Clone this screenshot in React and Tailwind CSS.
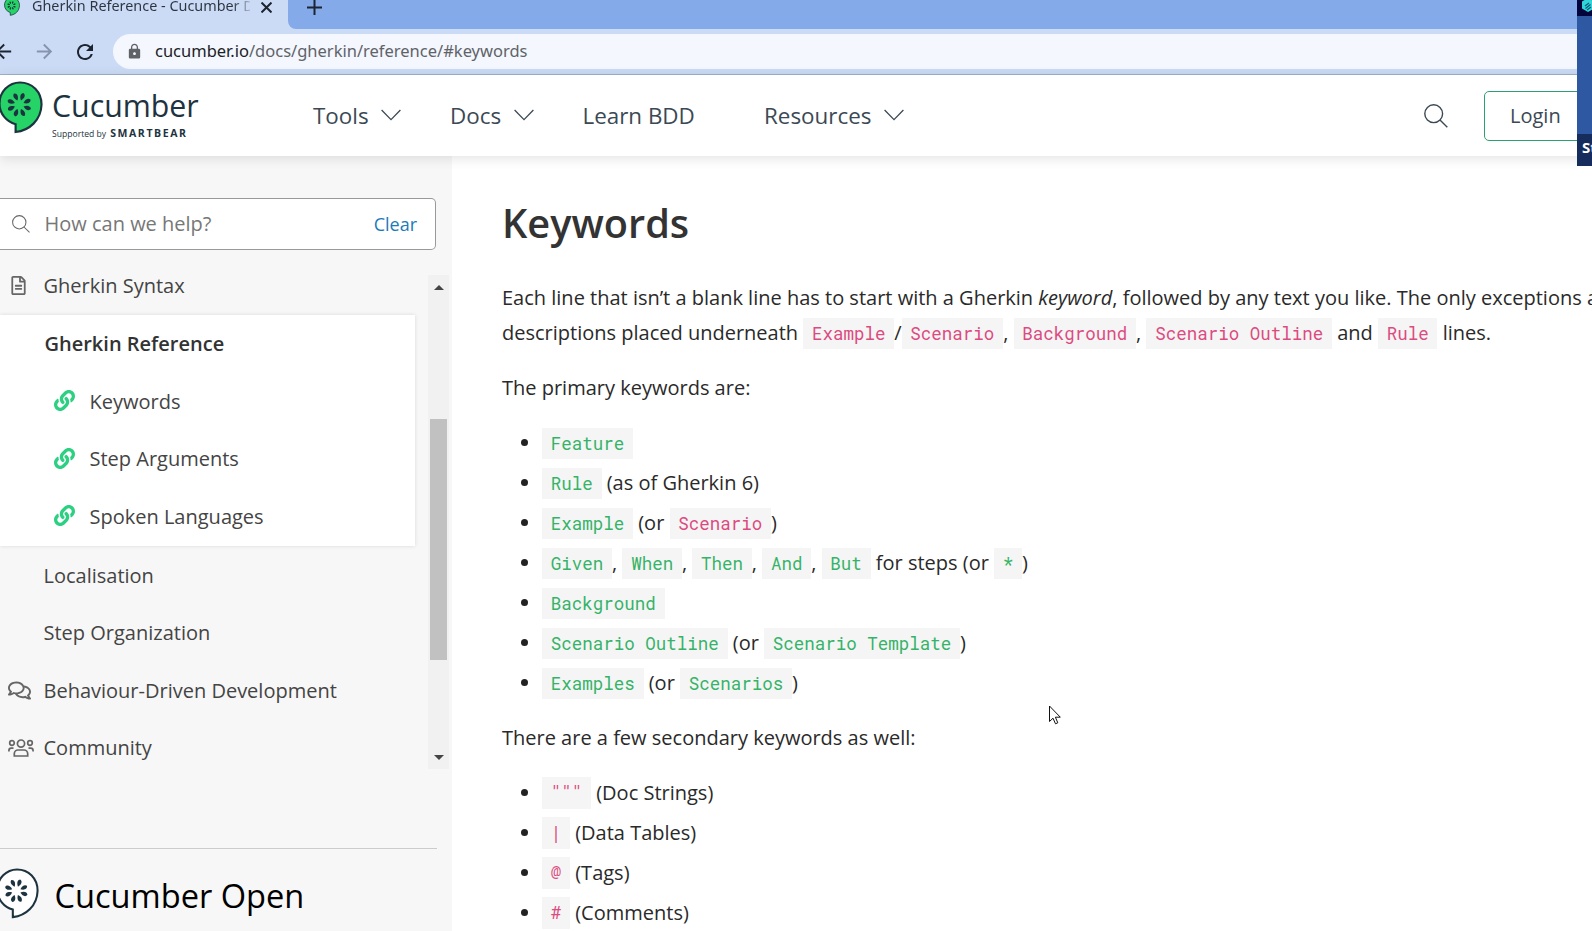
import React from 'react';
import { FaLink, FaRegFileAlt, FaRegComments } from 'react-icons/fa';
import { MdArrowBack, MdArrowForward, MdRefresh, MdLock } from 'react-icons/md';

const SEEDS = [22, 68, 112, 158, 202, 248, 292, 338];

function Balloon({ fill, className }) {
  return (
    <svg viewBox="0 0 46 54" className={className} preserveAspectRatio="none">
      <path
        d="M22.500 1.5C11 1.5 1.5 11 1.5 23c0 10 7 18.500 16.500 21v8C32 50.500 44 40 44.500 24 44.500 11 35 1.500 22.500 1.500Z"
        fill={fill}
        stroke="#1d3340"
        strokeWidth="2.2"
      />
      {SEEDS.map((a) => (
        <path
          key={a}
          d="M0 -4.800C-3.200 -8 -2.800 -11.500 -0.600 -12.600 2.600 -12 2.800 -8 0 -4.800Z"
          fill="#1d3340"
          transform={`translate(21.700 24.200) rotate(${a})`}
        />
      ))}
    </svg>
  );
}

function SearchIcon({ className }) {
  return (
    <svg viewBox="0 0 24 24" className={className} fill="none" stroke="currentColor" strokeWidth="1.4">
      <circle cx="9.700" cy="9.700" r="8.900" />
      <path d="M16 16l7.300 7.300" />
    </svg>
  );
}

function Chevron() {
  return (
    <svg viewBox="0 0 20 12" className="h-3 w-5" fill="none" stroke="#3c4a54" strokeWidth="1.3">
      <path d="M0.600 1L10 10.600 19.400 1" />
    </svg>
  );
}

function PeopleIcon() {
  return (
    <svg viewBox="0 0 26 18" className="h-[18px] w-[26px]" fill="none" stroke="#666" strokeWidth="1.7">
      <circle cx="13" cy="4.600" r="3.600" />
      <circle cx="4" cy="4" r="2.300" />
      <circle cx="22" cy="4" r="2.300" />
      <path d="M6.300 17v-2.200c0-2.200 1.700-3.800 3.700-3.800h6c2 0 3.700 1.600 3.700 3.800V17Z" />
      <path d="M.9 12.500V11.800c0-1.500 1-2.600 2.300-2.600h2.300M25.100 12.500V11.800c0-1.500-1-2.600-2.300-2.600h-2.300" />
    </svg>
  );
}

function Code({ children, green }) {
  return (
    <code
      className={`${green ? 'text-[#35b368]' : 'text-[#dc4b80]'} bg-[#f5f5f5] px-[8.75px] py-[4.4px] font-['Roboto_Mono','Liberation_Mono',monospace] text-[17.5px]`}
    >
      {children}
    </code>
  );
}

const G = ({ children }) => <Code green>{children}</Code>;

function Item({ children }) {
  return (
    <li className="flex h-10 items-center">
      <span className="mt-[-2px] mr-[14px] ml-[19px] size-[7px] rounded-full bg-[#222]" />
      <span className="leading-10 whitespace-nowrap">{children}</span>
    </li>
  );
}

function Row({ icon, children }) {
  return (
    <div className="flex h-[57.500px] shrink-0 items-center">
      <span className="flex w-[43.500px] items-center pl-2 text-[#666]">{icon}</span>
      <span>{children}</span>
    </div>
  );
}

function SubRow({ children }) {
  return (
    <div className="flex h-[57.500px] items-center">
      <FaLink className="mt-[-2px] mr-[14.500px] ml-[54px] size-[21px] text-[#2dd082]" />
      <span>{children}</span>
    </div>
  );
}

function Browser() {
  return (
    <div className="h-[75px] shrink-0 border-b border-[#9fb0cf] bg-[#ccdbf5]">
      <div className="flex h-[29px] text-[#2c3440]">
        <div className="flex w-[288px] items-start bg-[#ccdbf5]">
          <Balloon fill="#25d366" className="mt-[-3px] ml-1 h-[19px] w-4 shrink-0" />
          <span className="mt-[-5px] ml-3 w-[218px] shrink-0 overflow-hidden bg-gradient-to-r from-[#2c3440] from-92% to-[#2c3440]/20 bg-clip-text text-[14.400px] leading-[22px] whitespace-nowrap text-transparent font-['Noto_Sans',sans-serif]">
            Gherkin Reference - Cucumber D
          </span>
          <svg viewBox="0 0 10 10" className="mt-[2px] ml-[11px] size-[11px] shrink-0" stroke="#1c2430" strokeWidth="1.8">
            <path d="M0.500 0.500L9.500 9.500M9.500 0.500L0.500 9.500" />
          </svg>
        </div>
        <div className="flex-1 rounded-bl-lg bg-[#84aae9]">
          <svg viewBox="0 0 15 15" className="ml-[19px] size-[15px]" stroke="#1c2430" strokeWidth="2">
            <path d="M7.500 0V15M0 7.500H15" />
          </svg>
        </div>
      </div>
      <div className="flex h-[45px] items-center">
        <MdArrowBack className="-ml-2 size-[23px] shrink-0 text-[#1c2430]" />
        <MdArrowForward className="ml-[18px] size-[23px] shrink-0 text-[#8593b0]" />
        <MdRefresh className="ml-[17px] size-6 shrink-0 text-[#1c2430]" />
        <div className="ml-4 flex h-[35px] flex-1 items-center rounded-l-full bg-[#f4f7fe] text-[16.500px] text-[#5f6368] font-['Noto_Sans',sans-serif]">
          <MdLock className="mr-[12px] ml-[13px] size-[17px]" />
          <span className="text-[#202124]">cucumber.io</span>
          <span>/docs/gherkin/reference/#keywords</span>
        </div>
      </div>
    </div>
  );
}

function Header() {
  return (
    <header className="z-10 flex h-[81px] shrink-0 items-center bg-white text-[22.400px] text-[#3b4954] shadow-[0_2px_12px_rgba(0,0,0,0.12)]">
      <Balloon fill="#25d366" className="-ml-[2px] h-[53px] w-[45px] shrink-0 self-start mt-[6px]" />
      <div className="ml-[9px] w-[261px] text-[#1d3340]">
        <div className="-mt-[5px] text-[30.300px] leading-[40px]">Cucumber</div>
        <div className="flex items-baseline leading-[14px] whitespace-nowrap">
          <span className="text-[8.600px]">Supported by</span>
          <span className="ml-1 text-[10.500px] font-bold tracking-[1.600px]">SMARTBEAR</span>
        </div>
      </div>
      <nav className="flex items-center whitespace-nowrap">
        <span className="w-[68px]">Tools</span>
        <Chevron />
        <span className="ml-[49px] w-[64px]">Docs</span>
        <Chevron />
        <span className="ml-[48.500px] w-[181.500px]">Learn BDD</span>
        <span className="w-[120px]">Resources</span>
        <Chevron />
      </nav>
      <SearchIcon className="ml-auto size-6 shrink-0" />
      <div className="mr-[-2px] ml-9 flex h-[50px] w-[110px] items-center rounded-[5px] border border-[#2d9f72] pl-[25px] text-[20px]">
        Login
      </div>
    </header>
  );
}

function Sidebar() {
  return (
    <aside className="w-[452px] shrink-0 bg-[#f7f7f7] text-[#444]">
      <div className="mt-[42px] flex h-[52px] w-[436px] items-center rounded-r-[5px] border border-l-0 border-[#999] bg-white">
        <SearchIcon className="ml-3 size-[18px] text-[#666]" />
        <span className="ml-[14.500px] flex-1 text-[#777]">How can we help?</span>
        <span className="mr-[18px] text-[18px] text-[#1b7ab8]">Clear</span>
      </div>
      <div className="mt-[25px] flex h-[494px]">
        <div className="flex w-[428px] flex-col overflow-hidden">
          <div className="-mt-[18px]">
            <Row icon={<FaRegFileAlt className="ml-px size-[19px]" />}>Gherkin Syntax</Row>
          </div>
          <div className="h-[231px] w-[415px] shrink-0 bg-white pt-[0.800px] shadow-[0_0_4px_rgba(0,0,0,0.12)]">
            <div className="flex h-[57.500px] items-center pl-[44.500px] font-semibold text-[#333]">Gherkin Reference</div>
            <SubRow>Keywords</SubRow>
            <SubRow>Step Arguments</SubRow>
            <SubRow>Spoken Languages</SubRow>
          </div>
          <div className="pt-[1.500px]">
            <Row>Localisation</Row>
            <Row>Step Organization</Row>
            <Row icon={<FaRegComments className="size-[23px]" />}>Behaviour-Driven Development</Row>
            <Row icon={<PeopleIcon />}>Community</Row>
          </div>
        </div>
        <div className="flex w-[21px] flex-col items-center bg-[#f1f1f1]">
          <svg viewBox="0 0 10 5" className="mt-[10px] h-[5px] w-[10px]" fill="#444">
            <path d="M0 5L5 0 10 5Z" />
          </svg>
          <div className="mt-[129px] h-[241px] w-[17px] bg-[#c1c1c1]" />
          <svg viewBox="0 0 10 5" className="mt-auto mb-[9px] h-[5px] w-[10px]" fill="#444">
            <path d="M0 0L5 5 10 0Z" />
          </svg>
        </div>
      </div>
      <div className="mt-[79px] w-[437px] border-t border-[#ccc]" />
      <div className="flex pt-[19px]">
        <Balloon fill="#fff" className="-ml-[4px] h-[51px] w-[43px]" />
        <span className="ml-[15.500px] text-[32.600px] leading-[55px] text-black">Cucumber Open</span>
      </div>
    </aside>
  );
}

function Article() {
  return (
    <main className="w-[1140px] shrink-0 overflow-hidden bg-white pl-[50px] text-[#2a2a2a]">
      <h1 className="mt-[41px] text-[39.700px] leading-[52px] font-semibold text-[#333]">Keywords</h1>
      <p className="mt-[31px] leading-[35px] whitespace-nowrap">
        Each line that isn’t a blank line has to start with a Gherkin <em>keyword</em>, followed by any text you like. The only exceptions are
        <br />
        descriptions placed underneath <Code>Example</Code>/<Code>Scenario</Code>, <Code>Background</Code>, <Code>Scenario Outline</Code> and{' '}
        <Code>Rule</Code> lines.
      </p>
      <p className="mt-[19px] leading-[35px]">The primary keywords are:</p>
      <ul className="mt-[18.500px]">
        <Item><G>Feature</G></Item>
        <Item><G>Rule</G> (as of Gherkin 6)</Item>
        <Item><G>Example</G> (or <Code>Scenario</Code>)</Item>
        <Item><G>Given</G>, <G>When</G>, <G>Then</G>, <G>And</G>, <G>But</G> for steps (or <G>*</G>)</Item>
        <Item><G>Background</G></Item>
        <Item><G>Scenario Outline</G> (or <G>Scenario Template</G>)</Item>
        <Item><G>Examples</G> (or <G>Scenarios</G>)</Item>
      </ul>
      <p className="mt-[16.500px] leading-[35px]">There are a few secondary keywords as well:</p>
      <ul className="mt-[18px]">
        <Item><Code>"""</Code> (Doc Strings)</Item>
        <Item><Code>|</Code> (Data Tables)</Item>
        <Item><Code>@</Code> (Tags)</Item>
        <Item><Code>#</Code> (Comments)</Item>
      </ul>
    </main>
  );
}

export default function App() {
  return (
    <div className="relative flex h-[931px] w-[1592px] flex-col overflow-hidden bg-white text-[20px] font-['Open_Sans',sans-serif]">
      <Browser />
      <Header />
      <div className="flex min-h-0 flex-1 overflow-hidden">
        <Sidebar />
        <Article />
      </div>
      <div className="absolute top-0 right-0 z-20 flex h-[166px] w-[15px] flex-col overflow-hidden bg-[#2f58a2]">
        <div className="h-4 bg-[#04043c]">
          <svg viewBox="0 0 15 16" className="h-4 w-[15px]">
            <path d="M11 -2L17 1.500V8.500L11 12 5 8.500V1.500Z" fill="#2fd5d8" />
            <path d="M8 6l4-3M8.500 8.500l5-4M10 10l4-3" stroke="#0b5a78" strokeWidth="1.200" fill="none" />
          </svg>
        </div>
        <div className="mt-auto h-8 bg-[#162c5c] pl-[5px] text-[15px] leading-[27px] font-bold whitespace-nowrap text-white">St</div>
      </div>
      <svg viewBox="0 0 12 20" className="absolute top-[705px] left-[1049px] h-5 w-3" fill="#fff" stroke="#111" strokeWidth="1">
        <path d="M0.500 1V16.500L4 13.200 6.500 18.800 8.800 17.800 6.400 12.200H11.300Z" />
      </svg>
    </div>
  );
}
